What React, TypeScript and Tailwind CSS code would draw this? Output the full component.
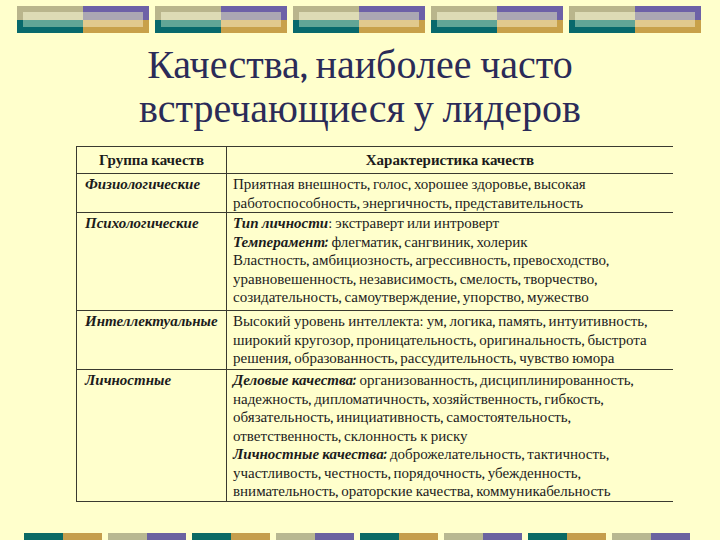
import type { ReactNode } from 'react';

// Слайд: качества лидеров (таблица)

function TopTile() {
  return (
    <svg width="132" height="27" viewBox="0 0 132 27" className="block shrink-0">
      <rect x="0" y="0" width="66" height="14" fill="#b9b58c" />
      <rect x="0" y="14" width="66" height="13" fill="#08696c" />
      <rect x="66" y="0" width="66" height="14" fill="#6d61a7" />
      <rect x="66" y="14" width="66" height="13" fill="#c8a14a" />
      <rect x="6" y="6" width="60" height="8" fill="#dddbb5" />
      <rect x="6" y="14" width="60" height="7" fill="#62a596" />
      <rect x="66" y="6" width="60" height="8" fill="#aba7b3" />
      <rect x="66" y="14" width="60" height="7" fill="#e1c98d" />
    </svg>
  );
}

function BottomPair({ alt }: { alt: boolean }) {
  return (
    <div className="flex h-[7px] w-[78px] shrink-0">
      <div className={alt ? 'w-[39px] bg-[#b8b891]' : 'w-[39px] bg-[#0b6a64]'} />
      <div className={alt ? 'w-[39px] bg-[#6b63a0]' : 'w-[39px] bg-[#c59e4c]'} />
    </div>
  );
}

function B({ children }: { children: ReactNode }) {
  return <b className="italic font-bold">{children}</b>;
}

function Row({
  group,
  h,
  children,
}: {
  group: string;
  h: string;
  children: ReactNode;
}) {
  return (
    <tr className={h}>
      <td className="w-[150px] border border-r-0 border-[#3a3a30] pl-[8px] pt-px align-top">
        <B>{group}</B>
      </td>
      <td className="border-y border-l border-[#3a3a30] pl-[6px] pt-px align-top whitespace-nowrap">
        {children}
      </td>
    </tr>
  );
}

export default function App() {
  return (
    <div className="flex h-[540px] w-[720px] flex-col overflow-hidden bg-[#ffffcc] font-serif">
      <div className="flex gap-[6px] pl-[17px] pt-[6px]">
        {[0, 1, 2, 3, 4].map((i) => (
          <TopTile key={i} />
        ))}
      </div>

      <h1 className="mt-[10px] text-center text-[40px] font-normal leading-[44px] text-[#2b2b58]">
        Качества, наиболее часто
        <br />
        встречающиеся у лидеров
      </h1>

      <table className="ml-[76px] mt-[15px] w-[597px] border-collapse text-[15px] leading-[18.5px] text-[#1c1c1c]">
        <tbody>
          <tr className="h-[27px]">
            <th className="w-[150px] border border-r-0 border-[#3a3a30] text-center font-bold">
              Группа качеств
            </th>
            <th className="border-y border-l border-[#3a3a30] text-center font-bold">
              Характеристика качеств
            </th>
          </tr>
          <Row group="Физиологические" h="h-[39px]">
            Приятная внешность, голос, хорошее здоровье, высокая
            <br />
            работоспособность, энергичность, представительность
          </Row>
          <Row group="Психологические" h="h-[98px]">
            <B>Тип личности</B>: экстраверт или интроверт
            <br />
            <B>Темперамент:</B> флегматик, сангвиник, холерик
            <br />
            Властность, амбициозность, агрессивность, превосходство,
            <br />
            уравновешенность, независимость, смелость, творчество,
            <br />
            созидательность, самоутверждение, упорство, мужество
          </Row>
          <Row group="Интеллектуальные" h="h-[59px]">
            Высокий уровень интеллекта: ум, логика, память, интуитивность,
            <br />
            широкий кругозор, проницательность, оригинальность, быстрота
            <br />
            решения, образованность, рассудительность, чувство юмора
          </Row>
          <Row group="Личностные" h="h-[129px]">
            <B>Деловые качества:</B> организованность, дисциплинированность,
            <br />
            надежность, дипломатичность, хозяйственность, гибкость,
            <br />
            обязательность, инициативность, самостоятельность,
            <br />
            ответственность, склонность к риску
            <br />
            <B>Личностные качества:</B> доброжелательность, тактичность,
            <br />
            участливость, честность, порядочность, убежденность,
            <br />
            внимательность, ораторские качества, коммуникабельность
          </Row>
        </tbody>
      </table>

      <div className="mt-auto flex gap-[6px] pl-[24px]">
        {[0, 1, 2, 3, 4, 5, 6, 7].map((i) => (
          <BottomPair key={i} alt={i % 2 === 1} />
        ))}
      </div>
    </div>
  );
}
